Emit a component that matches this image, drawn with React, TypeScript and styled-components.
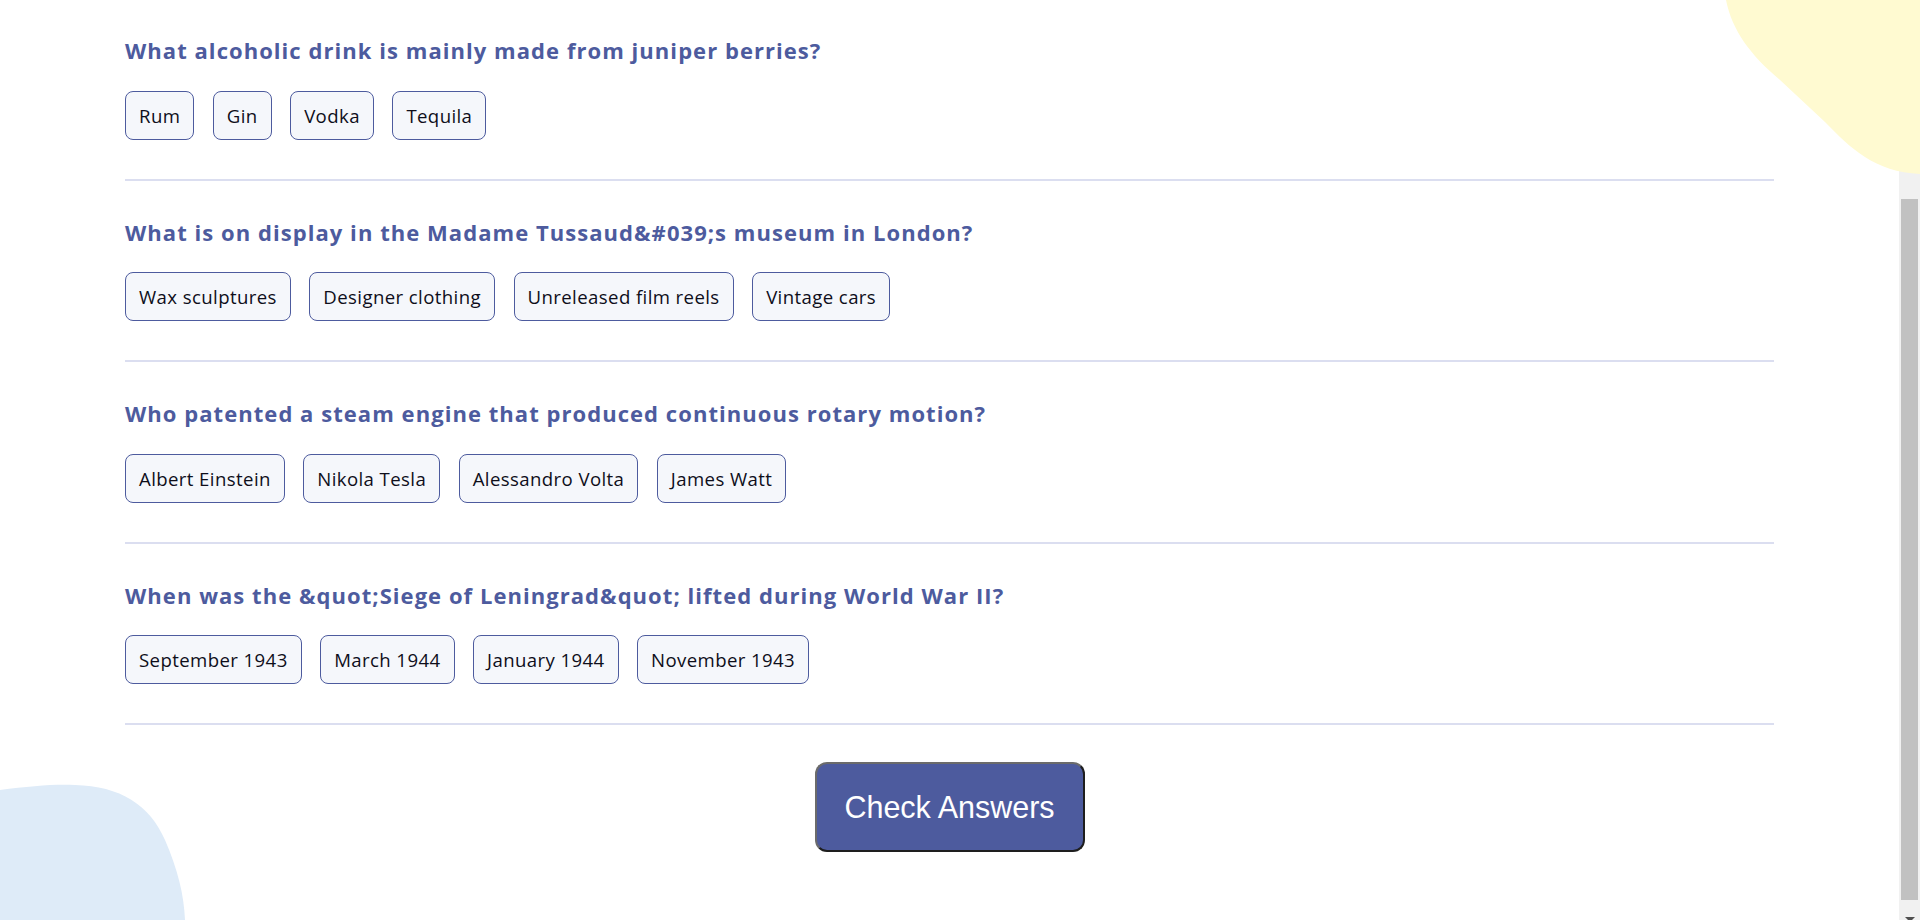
import React, { useLayoutEffect, useRef } from "react";
import styled, { createGlobalStyle } from "styled-components";

const GlobalStyle = createGlobalStyle`
  html, body {
    margin: 0;
    padding: 0;
    height: 100%;
    overflow: hidden;
    background: #ffffff;
  }
  * { box-sizing: border-box; }
`;

const Page = styled.div`
  position: relative;
  display: flex;
  height: 100vh;
  width: 100%;
  overflow: hidden;
  background: #ffffff;
`;

const Scroller = styled.main`
  flex: 1;
  min-width: 0;
  height: 100vh;
  overflow-y: scroll;
  scrollbar-width: none;
  &::-webkit-scrollbar {
    display: none;
  }
`;

const Rail = styled.div`
  flex: none;
  width: 21px;
  height: 100vh;
  display: flex;
  flex-direction: column;
  align-items: center;
  padding-top: 199px;
  background: #f1f1f1;
`;

const Thumb = styled.div`
  flex: none;
  width: 17px;
  height: 701px;
  background: #c1c1c1;
`;

const RailArrow = styled.svg`
  flex: none;
  margin-top: 17px;
`;

const Content = styled.div`
  display: flex;
  flex-direction: column;
  padding: 243px 125px 68px;
`;

const QuestionBlock = styled.section`
  display: flex;
  flex-direction: column;
  padding: 37px 0 39px;
  border-bottom: 2px solid #dbdef0;
`;

const Title = styled.h2`
  margin: 0 0 26.5px;
  font-family: "Open Sans", Lato, sans-serif;
  font-weight: 700;
  font-size: 22px;
  line-height: 28px;
  letter-spacing: 1.05px;
  color: #4d5b9e;
`;

const Answers = styled.div`
  display: flex;
  flex-wrap: wrap;
  gap: 18.5px;
`;

const Answer = styled.button`
  height: 49px;
  padding: 0 13px;
  border: 1px solid #4d5b9e;
  border-radius: 8px;
  background: #f5f7fb;
  color: #0e0e1a;
  font-family: "Open Sans", Lato, sans-serif;
  font-size: 18.6px;
  line-height: 23px;
  letter-spacing: 0.4px;
  cursor: pointer;
`;

const Footer = styled.div`
  display: flex;
  justify-content: center;
  padding-top: 37px;
`;

const CheckButton = styled.button`
  width: 270px;
  height: 90px;
  padding: 0;
  border-radius: 12px;
  border: 2px solid;
  border-color: #6b6b6b #1e1e1e #1e1e1e #6b6b6b;
  background: #4d5b9e;
  color: #ffffff;
  font-family: "Liberation Sans", Arial, sans-serif;
  font-size: 30.5px;
  cursor: pointer;
`;

const BlobTop = styled.svg`
  position: absolute;
  top: 0;
  right: 0;
  z-index: 2;
  pointer-events: none;
`;

const BlobBottom = styled.svg`
  position: absolute;
  left: 0;
  bottom: 0;
  z-index: 2;
  pointer-events: none;
`;

type Q = { question: string; answers: string[] };

const questions: Q[] = [
  {
    question: "What alcoholic drink is mainly made from juniper berries?",
    answers: ["Rum", "Gin", "Vodka", "Tequila"],
  },
  {
    question: "What is on display in the Madame Tussaud&#039;s museum in London?",
    answers: ["Wax sculptures", "Designer clothing", "Unreleased film reels", "Vintage cars"],
  },
  {
    question: "Who patented a steam engine that produced continuous rotary motion?",
    answers: ["Albert Einstein", "Nikola Tesla", "Alessandro Volta", "James Watt"],
  },
  {
    question: "When was the &quot;Siege of Leningrad&quot; lifted during World War II?",
    answers: ["September 1943", "March 1944", "January 1944", "November 1943"],
  },
];

export default function App() {
  const ref = useRef<HTMLElement | null>(null);

  useLayoutEffect(() => {
    const el = ref.current;
    if (el) el.scrollTop = el.scrollHeight;
  }, []);

  return (
    <>
      <GlobalStyle />
      <Page>
        <Scroller ref={ref}>
          <Content>
            {questions.map((q) => (
              <QuestionBlock key={q.question}>
                <Title>{q.question}</Title>
                <Answers>
                  {q.answers.map((a) => (
                    <Answer key={a}>{a}</Answer>
                  ))}
                </Answers>
              </QuestionBlock>
            ))}
            <Footer>
              <CheckButton>Check Answers</CheckButton>
            </Footer>
          </Content>
        </Scroller>
        <Rail aria-hidden="true">
          <Thumb />
          <RailArrow width="10" height="6" viewBox="0 0 10 6">
            <polygon points="0,0 10,0 5,5" fill="#505050" />
          </RailArrow>
        </Rail>
        <BlobTop width="220" height="180" viewBox="0 0 220 180">
          <path
            d="M26 0 C 32 30, 50 55, 80 80 L 125 122 C 150 148, 175 172, 220 174 L 220 0 Z"
            fill="#fffad1"
          />
        </BlobTop>
        <BlobBottom width="190" height="140" viewBox="0 0 190 140">
          <path
            d="M0 10 C 30 6, 55 4, 75 5 C 120 6, 150 25, 165 60 C 178 90, 184 115, 185 140 L 0 140 Z"
            fill="#deebf8"
          />
        </BlobBottom>
      </Page>
    </>
  );
}
